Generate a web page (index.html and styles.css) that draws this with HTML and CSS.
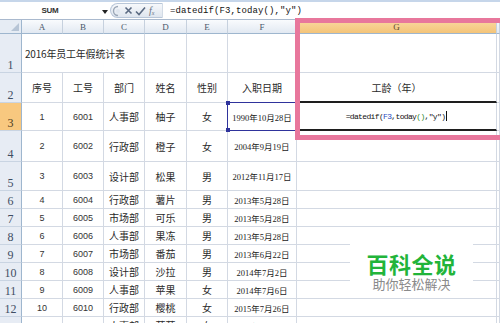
FILE: index.html
```html
<!DOCTYPE html>
<html lang="zh">
<head>
<meta charset="utf-8">
<title>2016年员工年假统计表</title>
<link rel="stylesheet" href="styles.css">
</head>
<body>
<div class="fbar">
  <div class="namebox">SUM</div>
  <div class="nbarrow"><svg width="6" height="4" viewBox="0 0 6 4"><path d="M0 0H6L3 4Z" fill="#222"/></svg></div>
  <div class="pill">
    <svg class="pi" width="10" height="12" viewBox="0 0 10 12"><path d="M6 1.5A4.5 4.5 0 0 0 6 10.5" fill="none" stroke="#9aa6b6" stroke-width="1.4"/><circle cx="6" cy="6" r="2" fill="#dfe6ef"/></svg>
    <svg class="pi" width="9" height="9" viewBox="0 0 9 9"><path d="M1.5 1.5L7.5 7.5M7.5 1.5L1.5 7.5" stroke="#5a6a82" stroke-width="1.6"/></svg>
    <svg class="pi" width="11" height="10" viewBox="0 0 11 10"><path d="M1 5.5L4 8.5L10 1.5" fill="none" stroke="#5a6a82" stroke-width="1.6"/></svg>
    <span class="fx">f<sub>x</sub></span>
  </div>
  <div class="formula">=datedif(F3,today(),"y")</div>
</div>

<div class="sheet">
  <div class="corner"></div>
  <div class="ch">A</div><div class="ch">B</div><div class="ch">C</div><div class="ch">D</div><div class="ch">E</div><div class="ch">F</div><div class="ch sel">G</div><div class="ch"></div>

  <div class="rh">1</div>
  <div class="c title">2016年员工年假统计表</div><div class="c"></div><div class="c"></div><div class="c"></div><div class="c"></div><div class="c"></div>

  <div class="rh">2</div>
  <div class="c">序号</div><div class="c">工号</div><div class="c">部门</div><div class="c">姓名</div><div class="c">性别</div><div class="c">入职日期</div><div class="c thick">工龄（年）</div><div class="c"></div>

  <div class="rh sel">3</div>
  <div class="c n">1</div><div class="c n">6001</div><div class="c">人事部</div><div class="c">柚子</div><div class="c">女</div>
  <div class="c d ref">1990年10月28日<span class="refbox"><i class="h tl"></i><i class="h bl"></i></span></div>
  <div class="c thick edit"><span class="fm">=datedif(<b class="blue">F3</b>,today<b class="green">()</b>,"y")</span><span class="caret"></span></div><div class="c"></div>

  <div class="rh">4</div>
  <div class="c n">2</div><div class="c n">6002</div><div class="c">行政部</div><div class="c">橙子</div><div class="c">女</div><div class="c d">2004年9月19日</div><div class="c"></div><div class="c"></div>

  <div class="rh">5</div>
  <div class="c n">3</div><div class="c n">6003</div><div class="c">设计部</div><div class="c">松果</div><div class="c">男</div><div class="c d">2012年11月17日</div><div class="c"></div><div class="c"></div>

  <div class="rh">6</div>
  <div class="c n">4</div><div class="c n">6004</div><div class="c">行政部</div><div class="c">薯片</div><div class="c">男</div><div class="c d">2013年5月28日</div><div class="c"></div><div class="c"></div>

  <div class="rh">7</div>
  <div class="c n">5</div><div class="c n">6005</div><div class="c">市场部</div><div class="c">可乐</div><div class="c">男</div><div class="c d">2013年5月28日</div><div class="c"></div><div class="c"></div>

  <div class="rh">8</div>
  <div class="c n">6</div><div class="c n">6006</div><div class="c">人事部</div><div class="c">果冻</div><div class="c">男</div><div class="c d">2013年5月28日</div><div class="c"></div><div class="c"></div>

  <div class="rh">9</div>
  <div class="c n">7</div><div class="c n">6007</div><div class="c">市场部</div><div class="c">番茄</div><div class="c">男</div><div class="c d">2013年6月22日</div><div class="c"></div><div class="c"></div>

  <div class="rh">10</div>
  <div class="c n">8</div><div class="c n">6008</div><div class="c">设计部</div><div class="c">沙拉</div><div class="c">男</div><div class="c d">2014年7月2日</div><div class="c"></div><div class="c"></div>

  <div class="rh">11</div>
  <div class="c n">9</div><div class="c n">6009</div><div class="c">人事部</div><div class="c">苹果</div><div class="c">女</div><div class="c d">2014年7月6日</div><div class="c"></div><div class="c"></div>

  <div class="rh">12</div>
  <div class="c n">10</div><div class="c n">6010</div><div class="c">行政部</div><div class="c">樱桃</div><div class="c">女</div><div class="c d">2015年7月26日</div><div class="c"></div><div class="c"></div>

  <div class="rh">13</div>
  <div class="c n">11</div><div class="c n">6011</div><div class="c">人事部</div><div class="c">葡萄</div><div class="c">女</div><div class="c d">2015年8月12日</div><div class="c"></div><div class="c"></div>
</div>

<div class="highlight"></div>

<div class="watermark">
  <div class="wm-title">百科全说</div>
  <div class="wm-sub">助你轻松解决</div>
</div>
</body>
</html>
```

FILE: styles.css
```css
* { box-sizing: border-box; }
html, body { margin: 0; padding: 0; }
body {
  width: 500px;
  height: 323px;
  overflow: hidden;
  position: relative;
  background: #fff;
  font-family: "Noto Sans CJK SC", sans-serif;
  color: #222;
}

/* formula bar */
.fbar {
  display: flex;
  align-items: center;
  height: 20px;
  border-top: 2px solid #c6d6ea;
  border-bottom: 1px solid #a9b9ce;
  background: #fff;
}
.namebox {
  width: 100px;
  text-align: center;
  font-family: "Liberation Sans", sans-serif;
  font-size: 8px;
  font-weight: bold;
  color: #333;
  letter-spacing: -0.3px;
}
.nbarrow {
  width: 10px;
  display: flex;
  align-items: center;
  justify-content: flex-start;
  padding-left: 2px;
  padding-top: 2px;
}
.pill {
  width: 53px;
  height: 15px;
  display: flex;
  align-items: center;
  gap: 2px;
  padding-left: 1px;
  border: 1px solid #b9c7d9;
  border-right-color: #d2dbe6;
  border-radius: 8px 0 0 8px;
  background: linear-gradient(#f6f8fb, #dfe6ef);
}
.pi { display: block; flex: none; }
.fx {
  font-family: "Liberation Serif", serif;
  font-style: italic;
  font-size: 10px;
  color: #6a7485;
  line-height: 1;
  margin-left: 1px;
}
.fx sub { font-size: 6px; vertical-align: -1px; }
.formula {
  padding-left: 7px;
  font-family: "Liberation Mono", monospace;
  font-size: 9px;
  letter-spacing: 0.1px;
  color: #111;
}

/* sheet grid */
.sheet {
  display: grid;
  grid-template-columns: 22px 41px 41px 41px 42px 41px 69px 200px 1fr;
  grid-template-rows: 14px 39px 30px 28px 31px 29px repeat(8, 18px);
}
.corner {
  background: #e6ecf4;
  border-right: 1px solid #9eb6ce;
  border-bottom: 1px solid #9eb6ce;
  position: relative;
}
.corner::after {
  content: "";
  position: absolute;
  right: 2px;
  bottom: 2px;
  border-left: 8px solid transparent;
  border-bottom: 8px solid #b7c5d6;
}
.ch {
  display: flex;
  align-items: center;
  justify-content: center;
  background: linear-gradient(#f9fbfd, #e2e9f2);
  border-right: 1px solid #c6d1de;
  border-bottom: 1px solid #9eb6ce;
  font-family: "Liberation Serif", serif;
  font-size: 9px;
  color: #4a586b;
}
.ch.sel { background: linear-gradient(#f9d9a0, #f4c479); color: #5b4a30; }
.rh {
  display: flex;
  align-items: flex-end;
  justify-content: center;
  background: #e7ecf4;
  border-right: 1px solid #9eb6ce;
  border-bottom: 1px solid #c9d4e2;
  font-family: "Liberation Serif", serif;
  font-size: 12px;
  line-height: 12px;
  color: #3f4d63;
  padding-bottom: 1px;
}
.rh.sel { background: #f8c87f; color: #4a3a20; }

.c {
  display: flex;
  align-items: center;
  justify-content: center;
  border-right: 1px solid #d3d9e3;
  border-bottom: 1px solid #d3d9e3;
  font-size: 10px;
  white-space: nowrap;
  color: #2a2a2a;
}
.title {
  grid-column: span 3;
  justify-content: flex-start;
  padding-left: 3px;
  font-size: 10px;
  letter-spacing: -0.2px;
}
.n { font-family: "Liberation Sans", sans-serif; font-size: 9px; color: #333; }
.d { font-family: "Liberation Serif", "Noto Sans CJK SC", serif; font-size: 8.5px; color: #222; }
.thick { border-bottom: 2px solid #1e1e1e; }

.ref { position: relative; }
.refbox {
  position: absolute;
  left: -1px;
  top: -1px;
  right: -1px;
  bottom: -1px;
  border: 1px solid #2f339c;
}
.h {
  position: absolute;
  width: 4px;
  height: 4px;
  background: #2f339c;
}
.h.tl { left: -2px; top: -2px; }
.h.bl { left: -2px; bottom: -2px; }

.edit { gap: 1px; }
.fm {
  font-family: "Liberation Mono", monospace;
  font-size: 8px;
  letter-spacing: -0.65px;
  color: #111;
}
.fm b { font-weight: normal; }
.blue { color: #2b4cc0; }
.green { color: #2d8a2d; }
.caret { width: 1px; height: 10px; background: #111; }

/* overlays */
.highlight {
  position: absolute;
  left: 295px;
  top: 18px;
  width: 220px;
  height: 122px;
  border: 5px solid #e8779c;
}
.watermark {
  position: absolute;
  left: 350px;
  top: 231px;
  width: 123px;
  height: 66px;
  background: #fff;
  display: flex;
  flex-direction: column;
  align-items: center;
  justify-content: flex-start;
  padding-top: 20px;
}
.wm-title {
  font-size: 22px;
  font-weight: bold;
  color: #22b43a;
  line-height: 24px;
  letter-spacing: 0.5px;
}
.wm-sub {
  margin-top: 2px;
  font-size: 13px;
  color: #8a8a8a;
  line-height: 14px;
}
```
